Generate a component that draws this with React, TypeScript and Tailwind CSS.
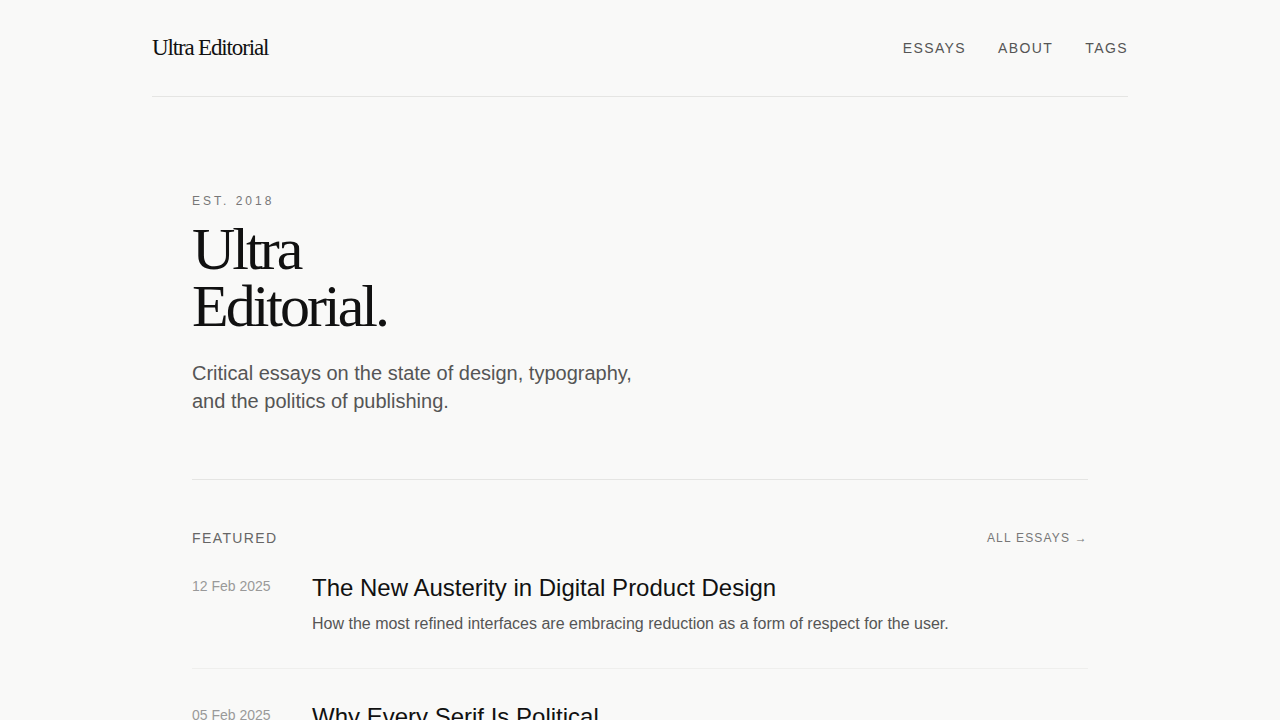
const articles = [
  {
    date: "12 Feb 2025",
    title: "The New Austerity in Digital Product Design",
    excerpt: "How the most refined interfaces are embracing reduction as a form of respect for the user.",
  },
  {
    date: "05 Feb 2025",
    title: "Why Every Serif Is Political",
    excerpt: "On the hidden histories carried by the letterforms we choose without thinking.",
  },
  {
    date: "28 Jan 2025",
    title: "Against the Infinite Scroll",
    excerpt: "A case for endings, edges and the quiet dignity of the last page.",
  },
];

const sans = "font-['Liberation_Sans',Arial,sans-serif]";
const serif = "font-['Liberation_Serif','Times_New_Roman',serif]";

function Header() {
  return (
    <header className="flex h-[97px] items-center justify-between border-b border-[#e5e5e3]">
      <a href="#" className={`${serif} text-[23px] tracking-tighter text-[#111111]`}>
        Ultra Editorial
      </a>
      <nav className={`${sans} flex items-center gap-8 text-sm uppercase tracking-[0.1em] text-[#555555]`}>
        <a href="#">Essays</a>
        <a href="#">About</a>
        <a href="#">Tags</a>
      </nav>
    </header>
  );
}

function Hero() {
  return (
    <section className="border-b border-[#e5e5e3] pb-16 pt-24">
      <p className={`${sans} mb-3 text-xs uppercase leading-4 tracking-[0.25em] text-[#777777]`}>
        Est. 2018
      </p>
      <h1 className={`${serif} text-[60px] leading-[0.95] tracking-tighter text-[#111111]`}>
        Ultra
        <br />
        Editorial.
      </h1>
      <p className={`${sans} mt-6 max-w-md text-xl leading-7 text-[#555555]`}>
        Critical essays on the state of design, typography, and the politics of publishing.
      </p>
    </section>
  );
}

function Featured() {
  return (
    <section className={`${sans} pt-12`}>
      <div className="mb-6 flex items-center justify-between">
        <h2 className="text-sm uppercase leading-5 tracking-[0.1em] text-[#666666]">Featured</h2>
        <a href="#" className="text-xs uppercase tracking-[0.1em] text-[#777777]">
          All essays →
        </a>
      </div>
      <ul>
        {articles.map((a, i) => (
          <li
            key={a.title}
            className={`flex border-b border-[#efefed] pb-8 ${i === 0 ? "pt-0" : "pt-8"}`}
          >
            <span className="w-[120px] shrink-0 pt-1 text-sm leading-5 text-[#999999]">{a.date}</span>
            <div>
              <h3 className="text-2xl leading-8 text-[#111111]">{a.title}</h3>
              <p className="mt-2 text-base leading-6 text-[#555555]">{a.excerpt}</p>
            </div>
          </li>
        ))}
      </ul>
    </section>
  );
}

export default function App() {
  return (
    <div className="min-h-screen bg-[#f9f9f8]">
      <div className="mx-auto w-[976px]">
        <Header />
        <main className="px-10">
          <Hero />
          <Featured />
        </main>
      </div>
    </div>
  );
}
